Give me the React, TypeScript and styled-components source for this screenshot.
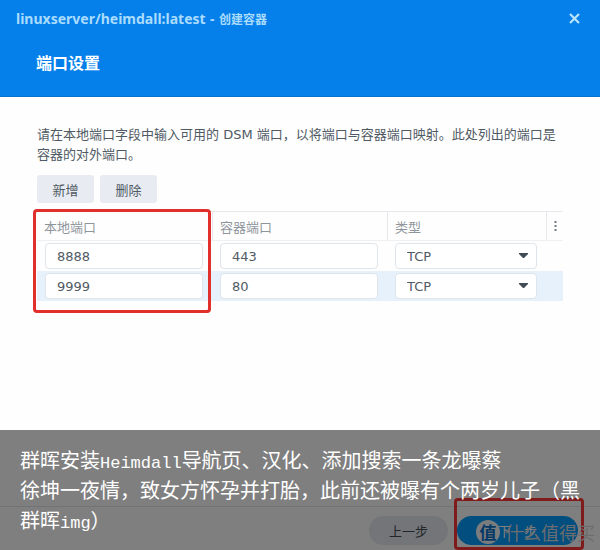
import React from "react";
import styled, { createGlobalStyle, css } from "styled-components";

const GlobalStyle = createGlobalStyle`
  * { box-sizing: border-box; }
  body {
    margin: 0;
    background: #fefefe;
    color: #505a64;
    font-family: "DejaVu Sans", "Noto Sans CJK SC", sans-serif;
    font-size: 13px;
  }
  button, input, select { font: inherit; color: inherit; }
`;

const Page = styled.main`
  position: relative;
  display: flex;
  flex-direction: column;
  min-height: 100vh;
  overflow: hidden;
`;

const Header = styled.header`
  background: #057fea;
  border-bottom: 1px solid #0a70cf;
  padding: 7px 16px 20px;
`;

const TitleBar = styled.div`
  display: flex;
  align-items: center;
  justify-content: space-between;
  height: 22px;
  color: #a9dcfd;
  font-size: 12px;
  font-weight: 700;
`;

const TitleName = styled.span`
  font-family: "Noto Sans", "Noto Sans CJK SC", sans-serif;
  font-size: 14px;
`;

const CloseButton = styled.button`
  display: flex;
  padding: 4px;
  border: 0;
  background: none;
`;

const StepTitle = styled.h1`
  margin: 23px 20px 0;
  color: #fff;
  font-size: 16px;
  line-height: 24px;
  font-weight: 700;
`;

const Content = styled.section`
  flex: 1;
  padding: 28px 37px 0;
`;

const Description = styled.p`
  margin: 0;
  line-height: 20px;
`;

const Toolbar = styled.div`
  display: flex;
  gap: 6px;
  margin-top: 10px;
`;

const ToolButton = styled.button`
  width: 57px;
  height: 28px;
  padding: 0;
  border: 0;
  border-radius: 3px;
  background: #e8ecf2;
`;

const TableArea = styled.div`
  position: relative;
  margin-top: 8px;
`;

const PortTable = styled.table`
  width: 100%;
  table-layout: fixed;
  border-collapse: separate;
  border-spacing: 0;
`;

const HeadCell = styled.th<{ $width?: number }>`
  width: ${(p) => (p.$width ? `${p.$width}px` : "auto")};
  height: 30px;
  padding: 0 7px;
  border-top: 1px solid #e6e8eb;
  border-bottom: 1px solid #eef0f2;
  color: #8f959c;
  font-weight: 400;
  text-align: left;
  & + & { border-left: 1px solid #e6e8eb; }
`;

const MenuCell = styled(HeadCell)`
  padding: 0;
  border-left: 1px solid #e6e8eb;
  text-align: center;
  svg { display: block; margin: auto; }
`;

const Row = styled.tr<{ $selected?: boolean }>`
  background: ${(p) => (p.$selected ? "#e6f1fc" : "transparent")};
`;

const Cell = styled.td`
  height: 30px;
  padding: 0 9px 0 8px;
`;

const field = css`
  display: block;
  width: 100%;
  height: 26px;
  padding: 0 11px;
  border: 1px solid #dfe5ea;
  border-radius: 4px;
  background-color: #fff;
  outline: 0;
`;

const PortInput = styled.input`
  ${field}
`;

const SelectBox = styled.div`
  position: relative;
  svg {
    position: absolute;
    top: 10px;
    right: 9px;
    pointer-events: none;
  }
`;

const TypeSelect = styled.select`
  ${field}
  appearance: none;
`;

const Marker = styled.div`
  position: absolute;
  border: 3px solid #e1302c;
  border-radius: 4px;
  pointer-events: none;
`;

const ColumnMarker = styled(Marker)`
  top: -2px;
  left: -4px;
  width: 178px;
  height: 104px;
`;

const ButtonMarker = styled(Marker)`
  top: -18px;
  right: -6px;
  width: 130px;
  height: 52px;
  border-color: #ff3634;
`;

const Footer = styled.footer`
  display: flex;
  justify-content: flex-end;
  gap: 9px;
  padding: 9px 22px 5px;
  border-top: 1px solid #e4e6e8;
`;

const NextArea = styled.div`
  position: relative;
`;

const FooterButton = styled.button<{ $primary?: boolean }>`
  width: ${(p) => (p.$primary ? "121px" : "79px")};
  height: 29px;
  padding: 0;
  border: 0;
  border-radius: 15px;
  background: ${(p) => (p.$primary ? "#039cff" : "#e8ebf1")};
  color: ${(p) => (p.$primary ? "#fff" : "#414b55")};
`;

const Watermark = styled.div`
  position: absolute;
  right: 5px;
  bottom: 5px;
  display: flex;
  align-items: center;
  gap: 5px;
  color: #d9dbdd;
  font-size: 18px;
  line-height: 26px;
  font-family: "Noto Sans CJK SC", sans-serif;
`;

const WatermarkLogo = styled.span`
  width: 24px;
  height: 24px;
  border-radius: 50%;
  background: #f6f9fc;
  color: #0870cb;
  font-size: 17px;
  font-weight: 700;
  line-height: 23px;
  text-align: center;
`;

const Caption = styled.div`
  position: absolute;
  right: 0;
  bottom: 0;
  left: 0;
  padding: 15px 20px;
  background: rgba(0, 0, 0, 0.5);
  color: #fff;
  font-size: 20px;
  line-height: 30px;
  font-family: "Noto Sans CJK SC", sans-serif;
  p {
    height: 30px;
    margin: 0;
  }
`;

const Latin = styled.span`
  font-family: "Liberation Mono", monospace;
  font-size: 17px;
  line-height: 20px;
`;

const ports = [
  { local: "8888", container: "443" },
  { local: "9999", container: "80" },
];

export default function App() {
  return (
    <>
      <GlobalStyle />
      <Page>
        <Header>
          <TitleBar>
            <span>
              <TitleName>linuxserver/heimdall:latest</TitleName> - 创建容器
            </span>
            <CloseButton aria-label="关闭">
              <svg width="11" height="11" viewBox="0 0 11 11" stroke="#b9e4ff" strokeWidth="2.2">
                <path d="M1 1 10 10M10 1 1 10" />
              </svg>
            </CloseButton>
          </TitleBar>
          <StepTitle>端口设置</StepTitle>
        </Header>
        <Content>
          <Description>
            请在本地端口字段中输入可用的 DSM 端口，以将端口与容器端口映射。此处列出的端口是容器的对外端口。
          </Description>
          <Toolbar>
            <ToolButton>新增</ToolButton>
            <ToolButton>删除</ToolButton>
          </Toolbar>
          <TableArea>
            <PortTable>
              <thead>
                <tr>
                  <HeadCell $width={175}>本地端口</HeadCell>
                  <HeadCell $width={175}>容器端口</HeadCell>
                  <HeadCell>类型</HeadCell>
                  <MenuCell $width={17} aria-label="列选项">
                    <svg width="3" height="12" viewBox="0 0 3 12" fill="#737b84">
                      <path d="M.5 1h2v2h-2zM.5 5h2v2h-2zM.5 9h2v2h-2z" />
                    </svg>
                  </MenuCell>
                </tr>
              </thead>
              <tbody>
                {ports.map((port, i) => (
                  <Row key={port.local} $selected={i === 1}>
                    <Cell>
                      <PortInput aria-label="本地端口" defaultValue={port.local} />
                    </Cell>
                    <Cell>
                      <PortInput aria-label="容器端口" defaultValue={port.container} />
                    </Cell>
                    <Cell>
                      <SelectBox>
                        <TypeSelect aria-label="类型" defaultValue="TCP">
                          <option>TCP</option>
                          <option>UDP</option>
                        </TypeSelect>
                        <svg width="9" height="5" viewBox="0 0 9 5" fill="#414b55">
                          <path d="M0 0h9v1L5 5H4L0 1z" />
                        </svg>
                      </SelectBox>
                    </Cell>
                    <Cell />
                  </Row>
                ))}
              </tbody>
            </PortTable>
            <ColumnMarker />
          </TableArea>
        </Content>
        <Footer>
          <FooterButton>上一步</FooterButton>
          <NextArea>
            <FooterButton $primary>下一步</FooterButton>
            <ButtonMarker />
          </NextArea>
        </Footer>
        <Watermark>
          <WatermarkLogo>值</WatermarkLogo>
          <span>什么值得买</span>
        </Watermark>
        <Caption>
          <p>
            群晖安装<Latin>Heimdall</Latin>导航页、汉化、添加搜索一条龙曝蔡
          </p>
          <p>徐坤一夜情，致女方怀孕并打胎，此前还被曝有个两岁儿子（黑</p>
          <p>
            群晖<Latin>img</Latin>）
          </p>
        </Caption>
      </Page>
    </>
  );
}
